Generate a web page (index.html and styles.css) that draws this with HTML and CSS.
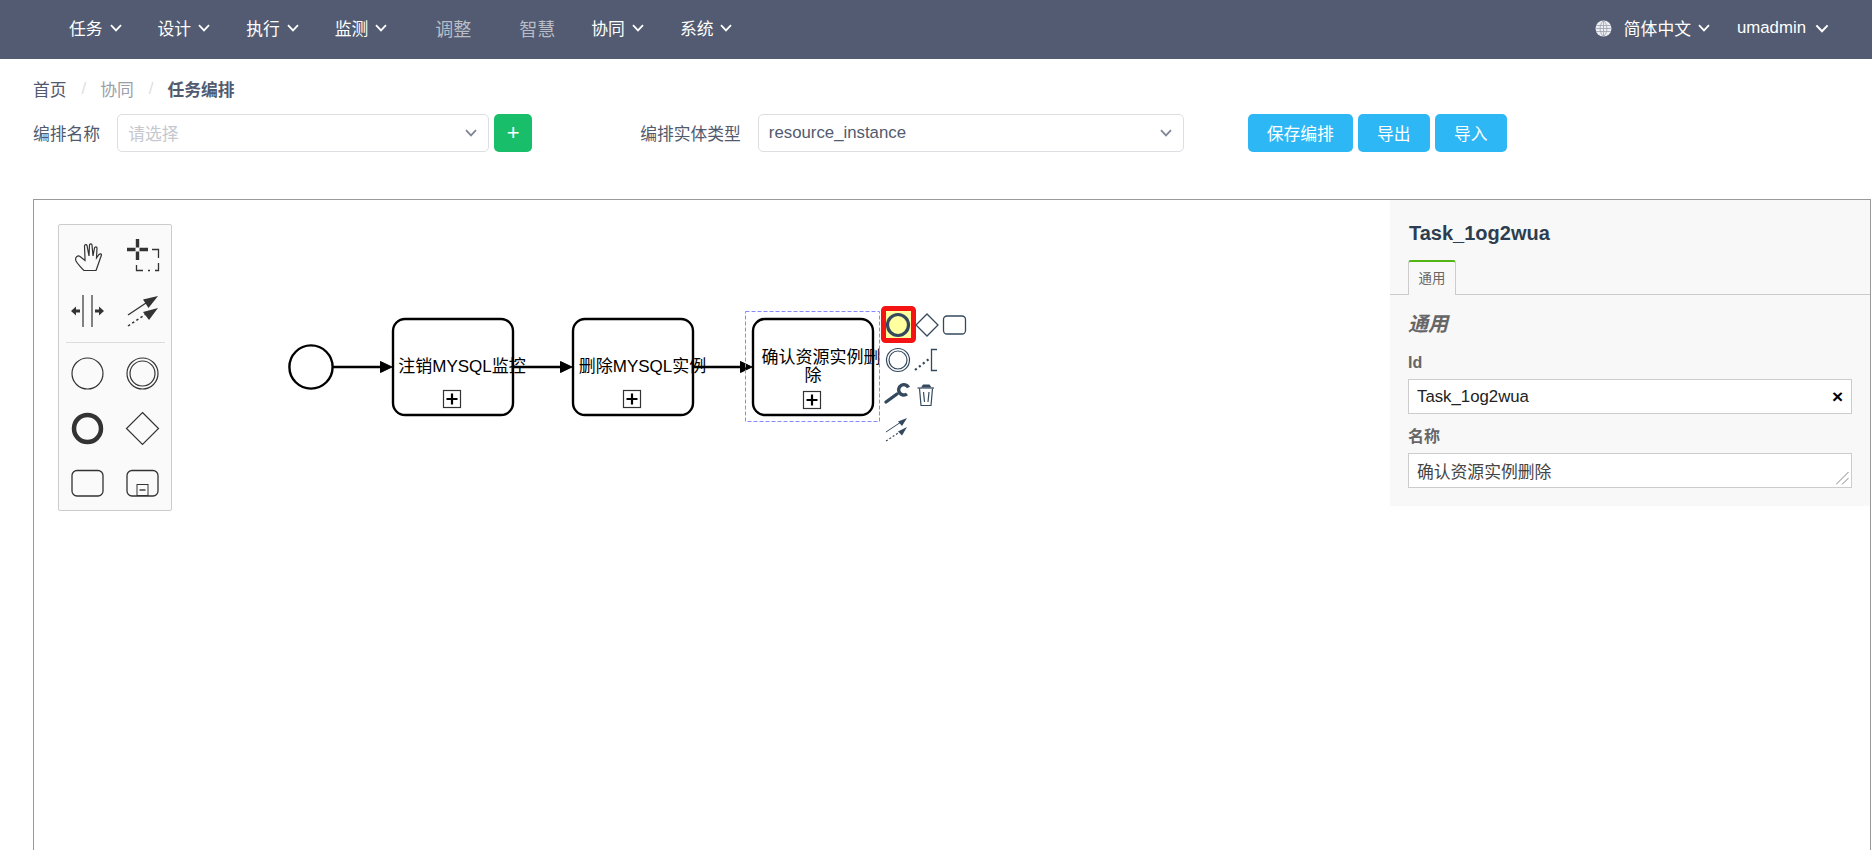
FILE: index.html
```html
<!DOCTYPE html>
<html lang="en">
<head>
    <meta charset="UTF-8">
    <meta name="viewport" content="width=device-width, initial-scale=1.0">
    <title>任务编排</title>
    <link rel="stylesheet" href="styles.css">
</head>
<body>

    <!-- Shared shapes -->
    <svg class="defs" width="0" height="0">
        <defs>
            <symbol id="chev" viewBox="0 0 12 8">
                <path d="M1 1.2 L6 6.4 L11 1.2" fill="none" stroke="currentColor" stroke-width="1.8"/>
            </symbol>
            <g id="expand">
                <rect x="0.5" y="0.5" width="17" height="17" fill="#fff" stroke="#333" stroke-width="1.2"/>
                <path d="M9 3.5 V14.5 M3.5 9 H14.5" stroke="#000" stroke-width="2.2"/>
            </g>
        </defs>
    </svg>

    <!-- Top navigation -->
    <header class="topbar">
        <nav class="nav">
            <a class="nav-item">任务 <svg class="chev"><use href="#chev"/></svg></a>
            <a class="nav-item">设计 <svg class="chev"><use href="#chev"/></svg></a>
            <a class="nav-item">执行 <svg class="chev"><use href="#chev"/></svg></a>
            <a class="nav-item">监测 <svg class="chev"><use href="#chev"/></svg></a>
            <a class="nav-item plain">调整</a>
            <a class="nav-item plain">智慧</a>
            <a class="nav-item">协同 <svg class="chev"><use href="#chev"/></svg></a>
            <a class="nav-item">系统 <svg class="chev"><use href="#chev"/></svg></a>
        </nav>
        <div class="top-right">
            <svg class="globe" viewBox="0 0 17 17">
                <circle cx="8.5" cy="8.5" r="8" fill="#eceef2"/>
                <path d="M1 5.5 H16 M0.5 8.5 H16.5 M1 11.5 H16 M8.5 0.5 V16.5 M8.5 0.5 C4 4 4 13 8.5 16.5 M8.5 0.5 C13 4 13 13 8.5 16.5" fill="none" stroke="#9aa0ad" stroke-width="0.8"/>
            </svg>
            <a class="nav-item lang">简体中文 <svg class="chev"><use href="#chev"/></svg></a>
            <a class="nav-item user">umadmin <svg class="chev wide"><use href="#chev"/></svg></a>
        </div>
    </header>

    <!-- Breadcrumb -->
    <div class="breadcrumb">
        <span class="crumb-home">首页</span>
        <span class="crumb-sep">/</span>
        <span class="crumb-link">协同</span>
        <span class="crumb-sep">/</span>
        <strong class="crumb-current">任务编排</strong>
    </div>

    <!-- Toolbar -->
    <div class="toolbar">
        <label class="field-label">编排名称</label>
        <div class="select select-name">
            <span class="placeholder">请选择</span>
            <svg class="chev select-chev"><use href="#chev"/></svg>
        </div>
        <button class="btn btn-add">+</button>
        <label class="field-label label-type">编排实体类型</label>
        <div class="select select-type">
            <span>resource_instance</span>
            <svg class="chev select-chev"><use href="#chev"/></svg>
        </div>
        <div class="btn-group">
            <button class="btn btn-blue btn-save">保存编排</button>
            <button class="btn btn-blue btn-small">导出</button>
            <button class="btn btn-blue btn-small">导入</button>
        </div>
    </div>

    <!-- Modeler canvas -->
    <div class="canvas">

        <!-- Diagram, drawn with page coordinates -->
        <svg class="diagram" width="1100" height="320">
            <g transform="translate(-34 -200)">
                <circle cx="311" cy="367" r="21.6" fill="#fff" stroke="#000" stroke-width="2.4"/>

                <g fill="#fff" stroke="#000" stroke-width="2.4">
                    <rect x="393" y="319" width="120" height="96" rx="12"/>
                    <rect x="573" y="319" width="120" height="96" rx="12"/>
                    <rect x="753" y="319" width="120" height="96" rx="12"/>
                </g>

                <!-- Sequence flows -->
                <g stroke="#000" stroke-width="2.4">
                    <path d="M333 367 H382 M513 367 H562 M693 367 H742"/>
                </g>
                <g fill="#000" stroke="#000" stroke-width="1">
                    <path d="M380.5 361.500 L392 367 L380.5 372.500 Z"/>
                    <path d="M560.5 361.500 L572 367 L560.5 372.500 Z"/>
                    <path d="M740.5 361.500 L752 367 L740.5 372.500 Z"/>
                </g>

                <use href="#expand" x="443" y="390"/>
                <use href="#expand" x="623" y="390"/>
                <use href="#expand" x="803" y="391"/>

                <g class="task-label" text-anchor="middle">
                    <text x="462" y="372">注销MYSQL监控</text>
                    <text x="642.5" y="372">删除MYSQL实例</text>
                    <text x="821" y="363">确认资源实例删</text>
                    <text x="813" y="381">除</text>
                </g>

                <!-- Selection outline -->
                <rect x="745.5" y="311.5" width="134" height="110" fill="none" stroke="#8888ff" stroke-dasharray="4 2"/>

                <!-- Context pad -->
                <rect x="883.5" y="308.5" width="30" height="32" rx="2" fill="#ffff9f" stroke="#f41414" stroke-width="5"/>
                <g fill="none" stroke="#34495e">
                    <circle cx="898" cy="325" r="10.5" stroke-width="3.2"/>
                    <path d="M927 314 L938 325 L927 336 L916 325 Z" stroke-width="1.3"/>
                    <rect x="943.5" y="316" width="22" height="18" rx="3.5" stroke-width="1.3"/>
                    <circle cx="898" cy="360" r="11.5" stroke-width="1.2"/>
                    <circle cx="898" cy="360" r="9" stroke-width="1.2"/>
                    <path d="M915 370 L929 359" stroke-width="2.2" stroke-dasharray="2.2 2.8"/>
                    <path d="M937 349.5 H931.5 V370.5 H937" stroke-width="1.3"/>
                </g>
                <!-- Wrench -->
                <g fill="none" stroke="#34495e">
                    <path d="M886 402 L897 394" stroke-width="3.4" stroke-linecap="round"/>
                    <path d="M908.5 387.5 A5.2 5.2 0 1 0 907 394" stroke-width="3.4"/>
                </g>
                <!-- Trash -->
                <g fill="none" stroke="#34495e" stroke-width="1.2">
                    <path d="M917.5 388 H934"/>
                    <path d="M919.5 388.5 L921 405.5 H931 L932.5 388.5"/>
                    <path d="M923.5 392 L924.5 402 M929 392 L928 402"/>
                </g>
                <path d="M921 387.5 L923 384.5 H929.5 L931.5 387.5 Z" fill="#34495e"/>
                <!-- Connect -->
                <path d="M886 432 L901 422" stroke="#34495e" stroke-width="1"/>
                <path d="M907 418 L898 421.5 L902 426 Z" fill="#34495e"/>
                <path d="M886 441 L899 432.5" stroke="#34495e" stroke-width="1.2" stroke-dasharray="2 2"/>
                <path d="M907 427 L898 431.5 L902 435.5 Z" fill="#34495e"/>
            </g>
        </svg>

        <!-- Palette -->
        <div class="palette">
            <div class="palette-grid">
                <svg viewBox="0 0 55 55"><path d="M16 32 C17 34 22 40 24 41.5 H36 C38 36 40 30 41.5 26 C41.5 24.5 40 24.5 39 25.5 L36.5 29 L37 19 C37 17.5 35 17.5 34.5 19 L33 27 L32 16 C32 14.5 29.5 14.5 29.5 16 L29 27 L27 16.5 C26.5 15 24.5 15.5 24.5 17 L25 29.5 L25 31.5 L20 27.5 C18 26 14.5 28 16 32 Z" fill="none" stroke="#333" stroke-width="1.2"/></svg>
                <svg viewBox="0 0 55 55"><path d="M22.5 10 V18.5 M22.5 22.5 V31 M12 20.5 H20.5 M24.5 20.5 H33" stroke="#333" stroke-width="3.4"/><path d="M37 20.5 H43.5 V29 M43.5 34 V41.5 H40 M35 41.5 H33 M28 41.5 H21.5 V36" fill="none" stroke="#333" stroke-width="1.3"/></svg>
                <svg viewBox="0 0 55 55"><path d="M23 11 V43 M32 11 V43" stroke="#333" stroke-width="1.2"/><path d="M11 27 L16 22.5 V25.5 H20 V28.5 H16 V31.5 Z M44 27 L39 22.5 V25.5 H35 V28.5 H39 V31.5 Z" fill="#333"/></svg>
                <svg viewBox="0 0 55 55"><path d="M13 31 L31 19" stroke="#333" stroke-width="1.3"/><path d="M43 12 L28 15.5 L33.5 24 Z" fill="#333"/><path d="M13 42 L31 30" stroke="#333" stroke-width="1.5" stroke-dasharray="2.5 2.5"/><path d="M43 24 L28 28 L34 36 Z" fill="#333"/></svg>
                <hr class="palette-sep">
                <svg viewBox="0 0 55 55"><circle cx="27.5" cy="27.5" r="15.5" fill="none" stroke="#333" stroke-width="1.2"/></svg>
                <svg viewBox="0 0 55 55"><circle cx="27.5" cy="27.5" r="15.5" fill="none" stroke="#333" stroke-width="1.2"/><circle cx="27.5" cy="27.5" r="12.5" fill="none" stroke="#333" stroke-width="1.2"/></svg>
                <svg viewBox="0 0 55 55"><circle cx="27.5" cy="27.5" r="13.5" fill="none" stroke="#333" stroke-width="4.5"/></svg>
                <svg viewBox="0 0 55 55"><path d="M27.5 11.5 L43.5 27.5 L27.5 43.5 L11.5 27.5 Z" fill="none" stroke="#333" stroke-width="1.2"/></svg>
                <svg viewBox="0 0 55 55"><rect x="12" y="14.5" width="31" height="25.5" rx="5" fill="none" stroke="#333" stroke-width="1.3"/></svg>
                <svg viewBox="0 0 55 55"><rect x="12" y="14.5" width="31" height="25.5" rx="5" fill="none" stroke="#333" stroke-width="1.3"/><rect x="22" y="28.5" width="11" height="11" fill="none" stroke="#333" stroke-width="1"/><path d="M24.5 34 H30.5" stroke="#333" stroke-width="1.4"/></svg>
            </div>
        </div>

        <!-- Properties panel -->
        <aside class="props">
            <h3 class="props-title">Task_1og2wua</h3>
            <div class="props-tabs">
                <span class="props-tab">通用</span>
            </div>
            <div class="props-body">
                <div class="props-group">通用</div>
                <div class="props-label">Id</div>
                <div class="props-input">
                    <span>Task_1og2wua</span>
                    <span class="props-clear">×</span>
                </div>
                <div class="props-label props-label-name">名称</div>
                <div class="props-input props-text">
                    <span>确认资源实例删除</span>
                    <svg class="resize-grip" viewBox="0 0 13 13"><path d="M0 12.5 L12.5 0 M6 12.5 L12.5 6" stroke="#666" stroke-width="0.8"/></svg>
                </div>
            </div>
        </aside>
    </div>

</body>
</html>
```

FILE: styles.css
```css
/* General styles */
html, body {
    height: 100%;
    overflow: hidden;
}

body {
    margin: 0;
    background-color: #fff;
    color: #515a6e;
    font-family: "Liberation Sans", "Noto Sans CJK SC", sans-serif;
    font-size: 16.8px;
}

.defs {
    position: absolute;
}

/* Top navigation */
.topbar {
    display: flex;
    align-items: center;
    box-sizing: border-box;
    height: 59px;
    padding: 0 43px 3px 69px;
    background-color: #525b71;
    color: #fff;
}

.nav {
    display: flex;
    align-items: center;
    gap: 36px;
}

.nav-item {
    display: flex;
    align-items: center;
    gap: 7px;
    white-space: nowrap;
}

.nav-item.plain {
    margin-left: 12px;
    color: #b9bdc6;
    font-size: 18px;
}

.chev {
    width: 12px;
    height: 8px;
}

.chev.wide {
    width: 14px;
    height: 9px;
}

.top-right {
    display: flex;
    align-items: center;
    margin-left: auto;
}

.globe {
    width: 17px;
    height: 17px;
    margin-right: 12px;
}

.user {
    margin-left: 27px;
    gap: 9px;
}

/* Breadcrumb */
.breadcrumb {
    display: flex;
    align-items: center;
    height: 24px;
    margin-top: 18px;
    padding-left: 33px;
}

.crumb-sep {
    margin: 0 14px 0 15px;
    color: #dcdee2;
}

.crumb-link {
    color: #9a9fa9;
}

.crumb-current {
    font-weight: bold;
}

/* Toolbar */
.toolbar {
    display: flex;
    align-items: center;
    height: 38px;
    margin-top: 13px;
    padding-left: 33px;
}

.field-label {
    margin-right: 17px;
    padding-bottom: 1px;
}

.label-type {
    margin-left: 108px;
}

.select {
    display: flex;
    align-items: center;
    justify-content: space-between;
    box-sizing: border-box;
    height: 38px;
    padding: 0 11px 0 10px;
    border: 1px solid #dcdee2;
    border-radius: 5px;
    background-color: #fff;
}

.select-name {
    width: 372px;
}

.select-type {
    width: 426px;
}

.placeholder {
    color: #c5c8ce;
}

.select-chev {
    color: #808695;
}

.btn {
    height: 38px;
    padding: 0;
    border: none;
    border-radius: 5px;
    color: #fff;
    font-family: inherit;
    font-size: 16.8px;
}

.btn-add {
    width: 38px;
    margin-left: 5px;
    background-color: #19be6b;
    font-size: 22px;
}

.btn-group {
    display: flex;
    gap: 5px;
    margin-left: 64px;
}

.btn-blue {
    background-color: #2db7f5;
}

.btn-save {
    width: 105px;
}

.btn-small {
    width: 72px;
}

/* Modeler canvas */
.canvas {
    position: relative;
    box-sizing: border-box;
    height: 800px;
    margin: 47px 1px 0 33px;
    border: 1px solid #999;
}

.diagram {
    position: absolute;
    left: 0;
    top: 0;
}

.task-label {
    fill: #000;
    font-size: 17px;
}

/* Palette */
.palette {
    position: absolute;
    left: 24px;
    top: 24px;
    box-sizing: border-box;
    width: 114px;
    height: 287px;
    border: 1px solid #ccc;
    border-radius: 2px;
    background-color: #fafafa;
}

.palette-grid {
    display: grid;
    grid-template-columns: 55px 55px;
    padding: 4px 0 0 1px;
}

.palette-grid svg {
    display: block;
    width: 55px;
    height: 55px;
}

.palette-sep {
    grid-column: 1 / 3;
    box-sizing: border-box;
    width: 99px;
    height: 1px;
    margin: 3px 0 3px 6px;
    border: none;
    background-color: #ddd;
}

/* Properties panel */
.props {
    position: absolute;
    right: 0;
    top: 0;
    box-sizing: border-box;
    width: 480px;
    height: 306px;
    background-color: #f8f8f8;
}

.props-title {
    margin: 0;
    padding: 20px 0 0 19px;
    color: #2c3e50;
    font-size: 20px;
    line-height: 26px;
}

.props-tabs {
    display: flex;
    height: 34px;
    margin-top: 14px;
    padding-left: 18px;
    border-bottom: 1px solid #ccc;
}

.props-tab {
    box-sizing: border-box;
    width: 48px;
    height: 35px;
    padding-top: 5px;
    border: 1px solid #ccc;
    border-top: 2px solid #52b415;
    border-bottom: none;
    border-radius: 3px 3px 0 0;
    background-color: #f8f8f8;
    color: #666;
    font-size: 13.4px;
    text-align: center;
}

.props-body {
    padding: 0 18px;
}

.props-group {
    margin-top: 16px;
    color: #666;
    font-size: 20px;
    font-style: italic;
    font-weight: bold;
    line-height: 26px;
}

.props-label {
    margin-top: 16px;
    color: #666;
    font-size: 16px;
    font-weight: bold;
    line-height: 20px;
}

.props-label-name {
    margin-top: 13px;
}

.props-input {
    position: relative;
    box-sizing: border-box;
    display: flex;
    align-items: center;
    justify-content: space-between;
    height: 35px;
    margin-top: 6px;
    padding: 0 8px;
    border: 1px solid #ccc;
    background-color: #fff;
    color: #222;
    font-size: 16.8px;
}

.props-clear {
    color: #000;
    font-size: 19px;
    font-weight: bold;
}

.props-text {
    color: #444;
}

.resize-grip {
    position: absolute;
    right: 2px;
    bottom: 2px;
    width: 13px;
    height: 13px;
}
```
